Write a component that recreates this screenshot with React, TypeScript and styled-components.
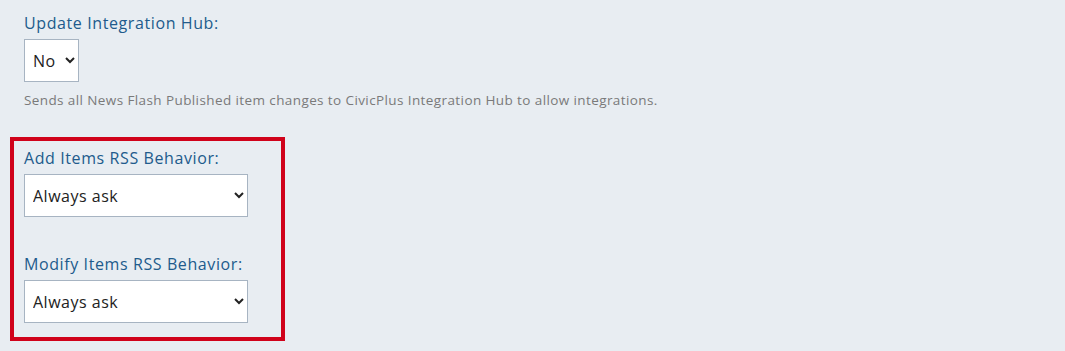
import React from "react";
import styled, { createGlobalStyle } from "styled-components";

const GlobalStyle = createGlobalStyle`
  html, body {
    margin: 0;
    padding: 0;
    background: #e8edf2;
  }
  body {
    font-family: "Open Sans", "Noto Sans", sans-serif;
  }
`;

const Page = styled.div`
  display: flex;
  flex-direction: column;
  padding: 12px 0 0 10px;
  min-height: 351px;
  box-sizing: border-box;
`;

const Field = styled.div<{ $gap?: number }>`
  display: flex;
  flex-direction: column;
  align-items: flex-start;
  padding-left: 14px;
  margin-bottom: ${({ $gap }) => $gap ?? 0}px;
`;

const Label = styled.label`
  color: #215b8c;
  font-size: 16px;
  letter-spacing: 0.6px;
  line-height: 22px;
  margin-bottom: 5px;
`;

const Select = styled.select<{ $width: number }>`
  width: ${({ $width }) => $width}px;
  height: 43px;
  padding: 0 6px 0 4px;
  border: 1px solid #a7b4c2;
  border-radius: 0;
  background: #ffffff;
  color: #222222;
  font-family: "Open Sans", "Noto Sans", sans-serif;
  font-size: 16px;
  letter-spacing: 0.5px;
  outline: none;
`;

const Hint = styled.p`
  margin: 8px 0 0;
  color: #7a7a7a;
  font-size: 13.5px;
  letter-spacing: 0.4px;
  line-height: 20px;
`;

const Highlight = styled.div`
  width: 275px;
  box-sizing: border-box;
  border: 4px solid #d0021b;
  margin-top: 27px;
  padding: 6px 0 14px;
  display: flex;
  flex-direction: column;
  & > ${Field} {
    padding-left: 10px;
  }
`;

export default function App() {
  return (
    <>
      <GlobalStyle />
      <Page>
        <Field>
          <Label>Update Integration Hub:</Label>
          <Select $width={55} defaultValue="No">
            <option>No</option>
            <option>Yes</option>
          </Select>
          <Hint>
            Sends all News Flash Published item changes to CivicPlus Integration Hub to allow integrations.
          </Hint>
        </Field>
        <Highlight>
          <Field $gap={36}>
            <Label>Add Items RSS Behavior:</Label>
            <Select $width={224} defaultValue="ask">
              <option value="ask">Always ask</option>
            </Select>
          </Field>
          <Field>
            <Label>Modify Items RSS Behavior:</Label>
            <Select $width={224} defaultValue="ask">
              <option value="ask">Always ask</option>
            </Select>
          </Field>
        </Highlight>
      </Page>
    </>
  );
}
